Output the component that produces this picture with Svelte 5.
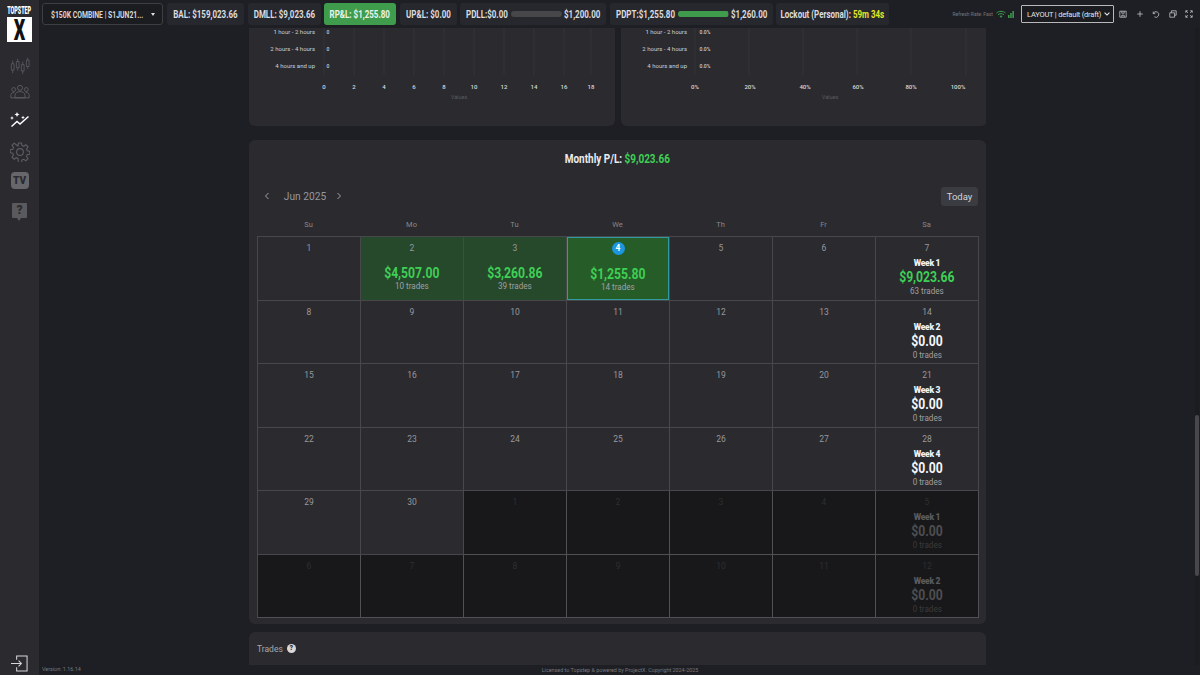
<script>
  const weekdays = ['Su', 'Mo', 'Tu', 'We', 'Th', 'Fr', 'Sa'];

  const chips = [
    { label: 'BAL: $159,023.66', w: 77 },
    { label: 'DMLL: $9,023.66', w: 73 },
    { label: 'RP&L: $1,255.80', w: 72, green: true },
    { label: 'UP&L: $0.00', w: 57 }
  ];

  const rows = ['1 hour - 2 hours', '2 hours - 4 hours', '4 hours and up'];
  const ticksA = [[324, '0'], [354, '2'], [384, '4'], [414, '6'], [444, '8'], [474, '10'], [504, '12'], [534, '14'], [564, '16'], [591, '18']];
  const ticksB = [[695, '0%'], [750, '20%'], [805, '40%'], [858, '60%'], [911, '80%'], [958, '100%']];
  const linesB = [695, 749, 803, 857, 911, 966];

  const pnl = {
    2: { money: '$4,507.00', trades: '10 trades' },
    3: { money: '$3,260.86', trades: '39 trades' },
    4: { money: '$1,255.80', trades: '14 trades' }
  };

  // 42 cells, june then the spillover into july
  const cells = [];
  let weekNo = 0;
  for (let i = 0; i < 42; i++) {
    const n = i + 1;
    const out = n > 30;
    const day = out ? n - 30 : n;
    const cell = { day, out, ...(out ? {} : pnl[n]), today: n === 4 };
    if (i % 7 === 6) {
      weekNo++;
      const shown = weekNo > 4 ? weekNo - 4 : weekNo;
      cell.week = 'Week ' + shown;
      cell.weekMoney = weekNo === 1 ? '$9,023.66' : '$0.00';
      cell.weekTrades = weekNo === 1 ? '63 trades' : '0 trades';
      cell.up = weekNo === 1;
    }
    cells.push(cell);
  }
</script>

<div class="shell">
  <aside class="side">
    <div class="logo">
      <span class="logo-top">TOPSTEP</span>
      <div class="logo-box"><span>X</span></div>
    </div>

    <svg class="nav first" viewBox="0 0 22 18" fill="none" stroke="#5d5d63" stroke-width=".9">
      <path d="M3 3v14M8.500 1v13M14 4v14M19.500 0v12" />
      <path d="M1.500 6.500h3v7h-3zM7 4h3v7H7zM12.500 7.500h3v7h-3zM18 2.500h3v7h-3z" fill="#2a2a2f" />
    </svg>
    <svg class="nav" viewBox="0 0 24 18" fill="none" stroke="#5d5d63" stroke-width="1.100">
      <circle cx="12" cy="4" r="3" /><circle cx="4.500" cy="6" r="2.300" /><circle cx="19.500" cy="6" r="2.300" />
      <path d="M6 16v-3c0-3 3-4.500 6-4.500s6 1.500 6 4.500v3zM1 16v-3c0-2 1.500-3.500 4-3.500M23 16v-3c0-2-1.500-3.500-4-3.500M1 16h22" />
    </svg>
    <svg class="nav white" viewBox="0 0 20 16" fill="none" stroke="#fff" stroke-width="1.500">
      <path d="M1.500 14.500L7 9.500l3 2.500 8.500-7.500" />
      <path d="M7 0l.8 1.800 1.800.7-1.800.7L7 5l-.8-1.800-1.800-.7 1.800-.7z" fill="#fff" stroke="none" />
      <path d="M13 3.500l.6 1.400 1.400.6-1.400.6L13 7.500l-.6-1.400-1.400-.6 1.400-.6zM2 4l.6 1.400 1.400.6-1.400.6L2 8l-.6-1.400L0 6l1.400-.6z" fill="#fff" stroke="none" />
    </svg>
    <svg class="nav gear" viewBox="0 0 20 20" fill="none" stroke="#5d5d63" stroke-width="1.100">
      <circle cx="10" cy="10" r="3.400" />
      <path d="M8.500 1h3l.5 2.600 1.700.7 2.200-1.500 2.100 2.100-1.500 2.200.7 1.700 2.600.5v3l-2.600.5-.7 1.700 1.500 2.200-2.100 2.100-2.200-1.500-1.700.7-.5 2.600h-3L8 16.400l-1.700-.7-2.200 1.500L2 15.100l1.500-2.200-.7-1.700L.2 10.700v-3l2.600-.5.7-1.700L2 3.300l2.100-2.100 2.200 1.500L8 4z" />
    </svg>
    <div class="tv">TV</div>
    <div class="help">?</div>

    <svg class="exit" viewBox="0 0 18 18" fill="none" stroke="#d8d8da" stroke-width="1.100">
      <path d="M6 5V1h11v16H6v-4M0 9h11M8 6l3 3-3 3" />
    </svg>
  </aside>

  <div class="main">
    <header class="top">
      <div class="account">
        <span class="cond left">$150K COMBINE | S1JUN21...</span>
        <i class="caret"></i>
      </div>
      {#each chips as chip}
        <div class="chip" class:green={chip.green} style="width: {chip.w}px"><span class="cond">{chip.label}</span></div>
      {/each}
      <div class="chip bar-chip pdll">
        <span class="cond left" style="width: 41px">PDLL:$0.00</span><div class="track"></div><span class="cond left" style="width: 36px">$1,200.00</span>
      </div>
      <div class="chip bar-chip pdpt">
        <span class="cond left" style="width: 58px">PDPT:$1,255.80</span><div class="track"><div class="fill" style="width: 99.700%"></div></div><span class="cond left" style="width: 36px">$1,260.00</span>
      </div>
      <div class="chip lockout"><span class="cond">Lockout (Personal): <em>59m 34s</em></span></div>

      <div class="tools">
        <span class="refresh">Refresh Rate: Fast</span>
        <svg class="wifi" viewBox="0 0 10 8" fill="none" stroke="#3f9c4c" stroke-width="1">
          <path d="M.5 3C3 .8 7 .8 9.500 3M2 4.700c1.700-1.400 4.300-1.400 6 0" /><circle cx="5" cy="6.500" r=".7" fill="#3f9c4c" />
        </svg>
        <svg class="signal" viewBox="0 0 6 7" fill="#3f9c4c"><path d="M0 4h1.500v3H0zM2.200 2h1.500v5H2.200zM4.400 0h1.500v7H4.400z" /></svg>
        <div class="layout-select">
          <span>LAYOUT | default (draft)</span>
          <svg viewBox="0 0 8 5" fill="none" stroke="#eee" stroke-width="1.400"><path d="M.8.8L4 4l3.200-3.200" /></svg>
        </div>
        <svg class="tool lead" viewBox="0 0 10 10" fill="none" stroke="#c4c4c6"><path d="M1 1.500h8v7.500H1zM3.500 1.500v2.500h3V1.500M3.500 9V6.500h3V9" /></svg>
        <svg class="tool" viewBox="0 0 10 10" fill="none" stroke="#c4c4c6"><path d="M5 1.500v7M1.500 5h7" /></svg>
        <svg class="tool" viewBox="0 0 10 10" fill="none" stroke="#c4c4c6"><path d="M1.500 2v2.500H4M1.700 4.400A3.500 3.500 0 1 1 3 8.500" /></svg>
        <svg class="tool" viewBox="0 0 10 10" fill="none" stroke="#c4c4c6"><path d="M1 3.500h6v5.500H1zM3 3.500V1h6v5.500H7" /></svg>
        <svg class="tool" viewBox="0 0 10 10" fill="none" stroke="#c4c4c6"><path d="M1 3.500V1h2.500M6.500 1H9v2.500M9 6.500V9H6.500M3.500 9H1V6.500M1 1l2.500 2.500M9 1L6.500 3.500M9 9L6.500 6.500M1 9l2.500-2.500" /></svg>
      </div>
    </header>

    <div class="scroll">
      <div class="charts">
        <section class="card chart">
          <svg viewBox="249 28 366 98">
            {#each ticksA as [x, t]}
              <line x1={x} x2={x} y1="28" y2="75" class="grid" />
              <text x={x} y="89" class="tick" text-anchor="middle">{t}</text>
            {/each}
            {#each rows as r, i}
              <text x="315" y={33.500 + i * 17.300} class="row" text-anchor="end">{r}</text>
              <text x="328" y={33.500 + i * 17.300} class="val" text-anchor="middle">0</text>
            {/each}
            <text x="459" y="99" class="axis" text-anchor="middle">Values</text>
          </svg>
        </section>
        <section class="card chart">
          <svg viewBox="621 28 366 98">
            {#each ticksB as [x, t], i}
              <line x1={linesB[i]} x2={linesB[i]} y1="28" y2="75" class="grid" />
              <text x={x} y="89" class="tick" text-anchor="middle">{t}</text>
            {/each}
            {#each rows as r, i}
              <text x="687" y={33.500 + i * 17.300} class="row" text-anchor="end">{r}</text>
              <text x="705" y={33.500 + i * 17.300} class="val" text-anchor="middle">0.0%</text>
            {/each}
            <text x="830" y="99" class="axis" text-anchor="middle">Values</text>
          </svg>
        </section>
      </div>

      <section class="card calendar">
        <h2><div>Monthly P/L: <span>$9,023.66</span></div></h2>
        <div class="cal-nav">
          <div class="month">
            <svg viewBox="0 0 6 8" fill="none" stroke="#a4a4a8" stroke-width="1"><path d="M4.500 1L1.500 4l3 3" /></svg>
            <span>Jun 2025</span>
            <svg viewBox="0 0 6 8" fill="none" stroke="#a4a4a8" stroke-width="1"><path d="M1.500 1l3 3-3 3" /></svg>
          </div>
          <button type="button">Today</button>
        </div>
        <div class="weekdays">
          {#each weekdays as d}<span>{d}</span>{/each}
        </div>
        <div class="days">
          {#each cells as c}
            <div class="cell" class:out={c.out} class:win={c.money} class:today={c.today}>
              {#if c.today}
                <span class="num badge">{c.day}</span>
              {:else}
                <span class="num">{c.day}</span>
              {/if}
              {#if c.money}
                <span class="money up spaced">{c.money}</span>
                <span class="trades">{c.trades}</span>
              {/if}
              {#if c.week}
                <span class="week">{c.week}</span>
                <span class="money" class:up={c.up}>{c.weekMoney}</span>
                <span class="trades">{c.weekTrades}</span>
              {/if}
            </div>
          {/each}
        </div>
      </section>

      <section class="card trades-card">
        <span>Trades</span>
        <i class="q">?</i>
      </section>
    </div>

    <footer class="foot">
      <span class="version">Version: 1.16.14</span>
      <span class="license">Licensed to Topstep &amp; powered by ProjectX. Copyright 2024-2025</span>
    </footer>

    <div class="scrollbar"><div class="thumb"></div></div>
  </div>
</div>

<style>
  :global(body) {
    margin: 0;
    background: #1e1f24;
    font-family: Roboto, "Liberation Sans", sans-serif;
    overflow: hidden;
  }
  .shell {
    display: flex;
    width: 1200px;
    height: 675px;
    overflow: hidden;
  }

  .side {
    width: 39px;
    flex: none;
    background: #2a2a2f;
    display: flex;
    flex-direction: column;
    align-items: center;
    padding-top: 6px;
    box-sizing: border-box;
  }
  .logo {
    display: flex;
    flex-direction: column;
    align-items: center;
    width: 25px;
  }
  .logo-top {
    font-size: 10px;
    line-height: 9px;
    font-weight: 900;
    color: #fff;
    transform: scaleX(0.54);
    white-space: nowrap;
  }
  .logo-box {
    margin-top: 2px;
    width: 25px;
    height: 25px;
    display: flex;
    align-items: center;
    justify-content: center;
    background: #fff;
    color: #111;
    font-size: 20px;
    line-height: 20px;
    font-weight: 900;
  }
  .logo-box span { display: block; transform: scale(0.9, 1.45); }
  .nav { width: 20px; height: 18px; margin-top: 8px; }
  .nav.first { margin-top: 15px; }
  .nav.white { margin-top: 11px; height: 16px; }
  .nav.gear { height: 20px; margin-top: 14px; }
  .tv {
    margin-top: 10px;
    width: 18px;
    height: 17px;
    border-radius: 4px;
    background: #66666b;
    color: #2a2a2f;
    font-size: 10px;
    font-weight: 900;
    line-height: 17px;
    text-align: center;
  }
  .help {
    position: relative;
    margin-top: 14px;
    width: 15px;
    height: 15px;
    background: #5a5a5e;
    color: #2a2a2f;
    font-size: 12px;
    font-weight: 900;
    line-height: 15px;
    text-align: center;
    border-radius: 1px;
  }
  .help::after {
    content: '';
    position: absolute;
    left: 5px;
    bottom: -3px;
    border-left: 2.500px solid transparent;
    border-right: 2.500px solid transparent;
    border-top: 3px solid #5a5a5e;
  }
  .exit { width: 17px; height: 17px; margin-top: auto; margin-bottom: 3px; }

  .main {
    position: relative;
    flex: 1;
    min-width: 0;
    display: flex;
    flex-direction: column;
  }
  .top {
    height: 28px;
    flex: none;
    display: flex;
    align-items: center;
    gap: 3.500px;
    padding: 0 0 0 3px;
    box-sizing: border-box;
    background: #1e1f24;
  }
  .cond {
    display: inline-block;
    flex: none;
    white-space: nowrap;
    transform: scaleX(0.76);
  }
  .cond.left { transform-origin: left center; }
  .account {
    width: 121px;
    height: 22px;
    box-sizing: border-box;
    border: 1px solid #3c3e44;
    border-radius: 3px;
    background: #1b1c20;
    display: flex;
    align-items: center;
    padding: 0 7px 0 8px;
    color: #d8d8da;
    font-size: 9.500px;
    font-weight: 700;
    white-space: nowrap;
    margin-right: 0.500px;
  }
  .account .cond { width: 98px; transform: scaleX(0.72); }
  .caret {
    margin-left: auto;
    flex: none;
    width: 0;
    height: 0;
    border-left: 2.500px solid transparent;
    border-right: 2.500px solid transparent;
    border-top: 3px solid #ddd;
  }
  .chip {
    height: 22px;
    flex: none;
    display: flex;
    align-items: center;
    justify-content: center;
    box-sizing: border-box;
    border-radius: 3px;
    background: #27282d;
    color: #dcdcde;
    font-size: 10.500px;
    font-weight: 700;
    white-space: nowrap;
  }
  .chip.green { background: #3f9c4c; color: #e8f4ea; }
  .bar-chip {
    padding: 0 6px;
    gap: 4px;
    justify-content: flex-start;
  }
  .bar-chip .cond:last-child { margin-left: -2px; }
  .pdll { width: 146px; }
  .pdpt { width: 163px; }
  .track {
    flex: 1;
    height: 6px;
    border-radius: 3px;
    background: #47474a;
    overflow: hidden;
  }
  .fill { height: 100%; background: #3f9c4c; }
  .lockout { width: 113px; }
  .lockout em { font-style: normal; color: #e6e626; }

  .tools {
    display: flex;
    align-items: center;
    margin-left: auto;
    padding-right: 7px;
  }
  .refresh { font-size: 5px; color: #77787c; margin-right: 3px; white-space: nowrap; }
  .wifi { width: 10px; height: 8px; margin-right: 2px; flex: none; }
  .signal { width: 6px; height: 7px; margin-right: 7px; flex: none; }
  .layout-select {
    width: 93px;
    height: 18px;
    flex: none;
    box-sizing: border-box;
    border: 1px solid #b9b9bb;
    border-radius: 1px;
    background: #1b1c20;
    color: #e4e4e6;
    font-size: 7.500px;
    letter-spacing: -0.200px;
    display: flex;
    align-items: center;
    justify-content: space-between;
    padding: 0 3px 0 5px;
    margin-right: 5px;
    white-space: nowrap;
  }
  .layout-select svg { width: 6px; height: 4px; flex: none; }
  .tool { width: 8px; height: 8px; margin-left: 8.500px; flex: none; }
  .tool.lead { margin-left: 0; }

  .scroll {
    flex: 1;
    min-height: 0;
    overflow: hidden;
    padding-left: 210px;
    width: 737px;
    display: flex;
    flex-direction: column;
    box-sizing: content-box;
  }
  .card {
    background: #2a2a2f;
    border-radius: 6px;
  }
  .charts {
    display: flex;
    gap: 6px;
    height: 98px;
    flex: none;
  }
  .chart {
    width: 366px;
    height: 98px;
    border-radius: 0 0 6px 6px;
  }
  .chart svg { display: block; width: 366px; height: 98px; }
  .chart .grid { stroke: #35353a; stroke-width: 0.800; }
  .chart text { font-family: Roboto, sans-serif; }
  .chart .tick { font-size: 6px; fill: #d8d8da; font-weight: 500; }
  .chart .row { font-size: 6px; fill: #d0d0d2; }
  .chart .val { font-size: 5px; fill: #d0d0d2; font-weight: 500; }
  .chart .axis { font-size: 5.500px; fill: #5c5c60; }

  .calendar {
    margin-top: 14px;
    height: 484px;
    flex: none;
    padding: 0 8px;
    box-sizing: border-box;
  }
  h2 {
    margin: 0;
    height: 39px;
    line-height: 39px;
    text-align: center;
    color: #ececee;
    font-size: 12px;
    font-weight: 700;
  }
  h2 div { display: inline-block; transform: scaleX(0.83); }
  h2 span { color: #3fcf55; }
  .cal-nav {
    height: 34px;
    display: flex;
    align-items: center;
    justify-content: space-between;
  }
  .month {
    display: flex;
    align-items: center;
    padding-left: 7px;
    color: #97979b;
    font-size: 10.200px;
  }
  .month svg { width: 6px; height: 8px; flex: none; }
  .month span { width: 46px; margin: 0 8px 0 12px; text-align: center; white-space: nowrap; }
  button {
    width: 37px;
    height: 19px;
    padding: 0;
    border: none;
    border-radius: 3px;
    background: #3a3c42;
    color: #d4d4d6;
    font-family: inherit;
    font-size: 9.500px;
  }
  .weekdays {
    display: grid;
    grid-template-columns: repeat(7, 103px);
    height: 23px;
    line-height: 23px;
    text-align: center;
    color: #87878b;
    font-size: 7.500px;
  }
  .days {
    display: grid;
    grid-template-columns: repeat(7, 1fr);
    grid-auto-rows: 63.500px;
    width: 722px;
    box-sizing: border-box;
    border-top: 1px solid #47474c;
    border-left: 1px solid #47474c;
  }
  .cell {
    border-right: 1px solid #47474c;
    border-bottom: 1px solid #47474c;
    box-sizing: border-box;
    display: flex;
    flex-direction: column;
    align-items: center;
    padding-top: 5px;
    min-width: 0;
    overflow: hidden;
  }
  .cell.win { background: #26482b; }
  .cell.today {
    background: #265c28;
    box-shadow: inset 0 0 0 1px #2f9aa0;
  }
  .cell.out { background: #18181a; border-color: #505055; }
  .num {
    height: 12px;
    line-height: 12px;
    font-size: 8.500px;
    color: #98989c;
  }
  .badge {
    width: 13px;
    height: 13px;
    line-height: 13px;
    border-radius: 50%;
    background: #1c96e0;
    color: #fff;
    text-align: center;
    font-weight: 700;
  }
  .out .num { color: #2e2e30; }
  .week {
    margin-top: 4px;
    font-size: 8.500px;
    line-height: 11px;
    font-weight: 900;
    color: #f2f2f4;
    letter-spacing: -0.300px;
  }
  .money {
    font-size: 14px;
    line-height: 17px;
    font-weight: 700;
    color: #f6f6f8;
    transform: scaleX(0.87);
  }
  .money.up { color: #3fcf55; }
  .money.spaced { margin-top: 11px; line-height: 16px; }
  .trades {
    font-size: 9px;
    line-height: 11px;
    color: #a0a0a4;
    transform: scaleX(0.9);
  }
  .out .week { color: #5a5a5c; }
  .out .money { color: #4e4e50; }
  .out .trades { color: #3a3a3c; }

  .trades-card {
    margin-top: 8px;
    height: 33px;
    flex: none;
    border-radius: 6px 6px 0 0;
    display: flex;
    align-items: center;
    gap: 4px;
    padding-left: 8px;
    color: #a8a8ac;
    font-size: 8.500px;
  }
  .q {
    width: 9px;
    height: 9px;
    border-radius: 50%;
    background: #d8d8da;
    color: #2a2a2f;
    font-size: 7px;
    line-height: 9px;
    font-weight: 900;
    font-style: normal;
    text-align: center;
  }

  .foot {
    position: relative;
    height: 10px;
    flex: none;
    font-size: 5.400px;
    line-height: 10px;
    color: #77787c;
    padding-left: 6px;
  }
  .version { position: absolute; left: 3px; top: -1px; }
  .license { display: inline-block; width: 1150px; text-align: center; }

  .scrollbar {
    position: absolute;
    right: 1px;
    top: 28px;
    bottom: 10px;
    width: 4px;
    background: #1b1c20;
  }
  .thumb {
    position: absolute;
    top: 387px;
    left: 0;
    width: 4px;
    height: 161px;
    border-radius: 2px;
    background: #47474c;
  }
</style>
